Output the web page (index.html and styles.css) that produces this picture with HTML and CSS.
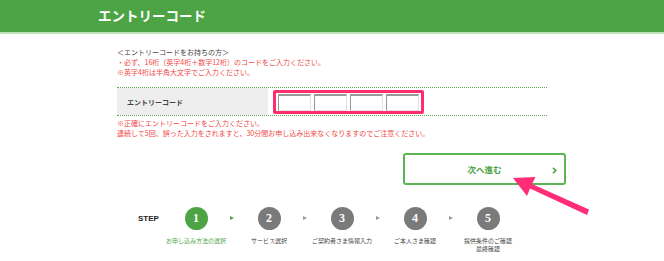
FILE: index.html
```html
<!DOCTYPE html>
<html lang="ja">
<head>
    <meta charset="UTF-8">
    <meta name="viewport" content="width=device-width, initial-scale=1.0">
    <title>エントリーコード</title>
    <link rel="stylesheet" href="styles.css">
</head>
<body>
    <header class="header">
        <h1 class="header-title">エントリーコード</h1>
    </header>

    <main class="main">
        <div class="notice">
            <p class="notice-head">＜エントリーコードをお持ちの方＞</p>
            <p class="notice-red">・必ず、16桁（英字4桁＋数字12桁）のコードをご入力ください。</p>
            <p class="notice-red">※英字4桁は半角大文字でご入力ください。</p>
        </div>

        <div class="code-row">
            <div class="code-label">エントリーコード</div>
            <div class="code-field">
                <div class="code-box">
                    <input type="text" class="code-input" maxlength="4">
                    <input type="text" class="code-input" maxlength="4">
                    <input type="text" class="code-input" maxlength="4">
                    <input type="text" class="code-input" maxlength="4">
                </div>
            </div>
        </div>

        <div class="error">
            <p>※正確にエントリーコードをご入力ください。</p>
            <p>連続して5回、誤った入力をされますと、30分間お申し込み出来なくなりますのでご注意ください。</p>
        </div>

        <div class="actions">
            <button type="button" class="next-btn">次へ進む
                <svg class="next-chevron" width="5" height="7" viewBox="0 0 5 7"><polyline points="1,0.8 3.8,3.5 1,6.2" fill="none" stroke="#4ca444" stroke-width="1.6"/></svg>
            </button>
        </div>

        <ol class="steps">
            <li class="steps-title">STEP</li>
            <li class="step current"><span class="step-num">1</span><span class="step-label">お申し込み方法の選択</span></li>
            <li class="step"><span class="step-num">2</span><span class="step-label">サービス選択</span></li>
            <li class="step"><span class="step-num">3</span><span class="step-label">ご契約者さま情報入力</span></li>
            <li class="step"><span class="step-num">4</span><span class="step-label">ご本人さま確認</span></li>
            <li class="step last"><span class="step-num">5</span><span class="step-label">提供条件のご確認<br>最終確認</span></li>
        </ol>
    </main>

    <svg class="pointer" width="664" height="261" viewBox="0 0 664 261">
        <polygon points="513,178 535.5,177 532,184 589,209.5 587,215 530,188.6 527,196" fill="#ff2d78"/>
    </svg>
</body>
</html>
```

FILE: styles.css
```css
body {
    margin: 0;
    padding: 0;
    background: #fff;
    font-family: "Noto Sans CJK JP", "Noto Sans", sans-serif;
    color: #333;
}
p {
    margin: 0;
}

.header {
    background-color: #4ca444;
    border-bottom: 2px solid #bfe2b8;
    height: 32px;
}
.header-title {
    width: 468px;
    margin: 0 auto;
    font-size: 13.5px;
    line-height: 31px;
    font-weight: 700;
    color: #fff;
}

.main {
    width: 468px;
    margin: 0 auto;
}

.notice {
    padding: 13px 19px 0;
    font-size: 7px;
    line-height: 10px;
}
.notice-head {
    color: #444;
}
.notice-red {
    color: #f04848;
}

.code-row {
    display: flex;
    margin: 10px 19px 0;
    border-top: 1px dotted #5cae4c;
    border-bottom: 1px dotted #5cae4c;
    height: 27px;
}
.code-label {
    width: 141px;
    background: #eeeeee;
    padding-left: 10px;
    font-size: 7px;
    font-weight: 700;
    color: #444;
    display: flex;
    align-items: center;
}
.code-field {
    display: flex;
    align-items: center;
    padding-left: 5px;
}
.code-box {
    display: flex;
    gap: 3px;
    padding: 1px 2px 0;
    border: 3px solid #ff2d6e;
    border-radius: 2px;
}
.code-input {
    width: 33px;
    height: 17px;
    box-sizing: border-box;
    margin: 0;
    padding: 0;
    border: 1px solid #e2e2e2;
    border-top: 2px solid #999;
    border-left: 1px solid #999;
}

.error {
    margin: 2px 19px 0;
    font-size: 7px;
    line-height: 10px;
    color: #f04848;
}

.actions {
    display: flex;
    justify-content: flex-end;
    margin-top: 15px;
}
.next-btn {
    position: relative;
    width: 163px;
    height: 32px;
    background: #fff;
    border: 2px solid #5cb552;
    border-radius: 3px;
    color: #4ca444;
    font-family: "Noto Sans CJK JP", sans-serif;
    font-size: 8.5px;
    font-weight: 700;
    padding: 0;
    cursor: pointer;
}
.next-chevron {
    position: absolute;
    right: 7px;
    top: 11.5px;
}

.steps {
    display: flex;
    list-style: none;
    margin: 22px 0 0;
    padding: 0 0 0 40px;
}
.steps-title {
    width: 21.5px;
    height: 23px;
    line-height: 23px;
    font-family: "Liberation Sans", sans-serif;
    font-size: 8px;
    font-weight: 700;
    color: #222;
}
.step {
    position: relative;
    width: 73px;
    display: flex;
    flex-direction: column;
    align-items: center;
}
.step::after {
    content: "";
    position: absolute;
    right: -1px;
    top: 9px;
    border-left: 4px solid #999;
    border-top: 2.5px solid transparent;
    border-bottom: 2.5px solid transparent;
}
.step.current::after {
    border-left-color: #4ca444;
}
.step.last::after {
    display: none;
}
.step-num {
    width: 23px;
    height: 23px;
    border-radius: 50%;
    background: #7a7a7a;
    color: #fff;
    font-family: "Liberation Serif", serif;
    font-weight: 700;
    font-size: 12px;
    line-height: 23px;
    text-align: center;
}
.step.current .step-num {
    background: #4ca444;
}
.step-label {
    margin-top: 7px;
    font-size: 6px;
    line-height: 8px;
    text-align: center;
    white-space: nowrap;
    color: #444;
}
.step.current .step-label {
    color: #4ca444;
}

.pointer {
    position: absolute;
    left: 0;
    top: 0;
    pointer-events: none;
}
```
